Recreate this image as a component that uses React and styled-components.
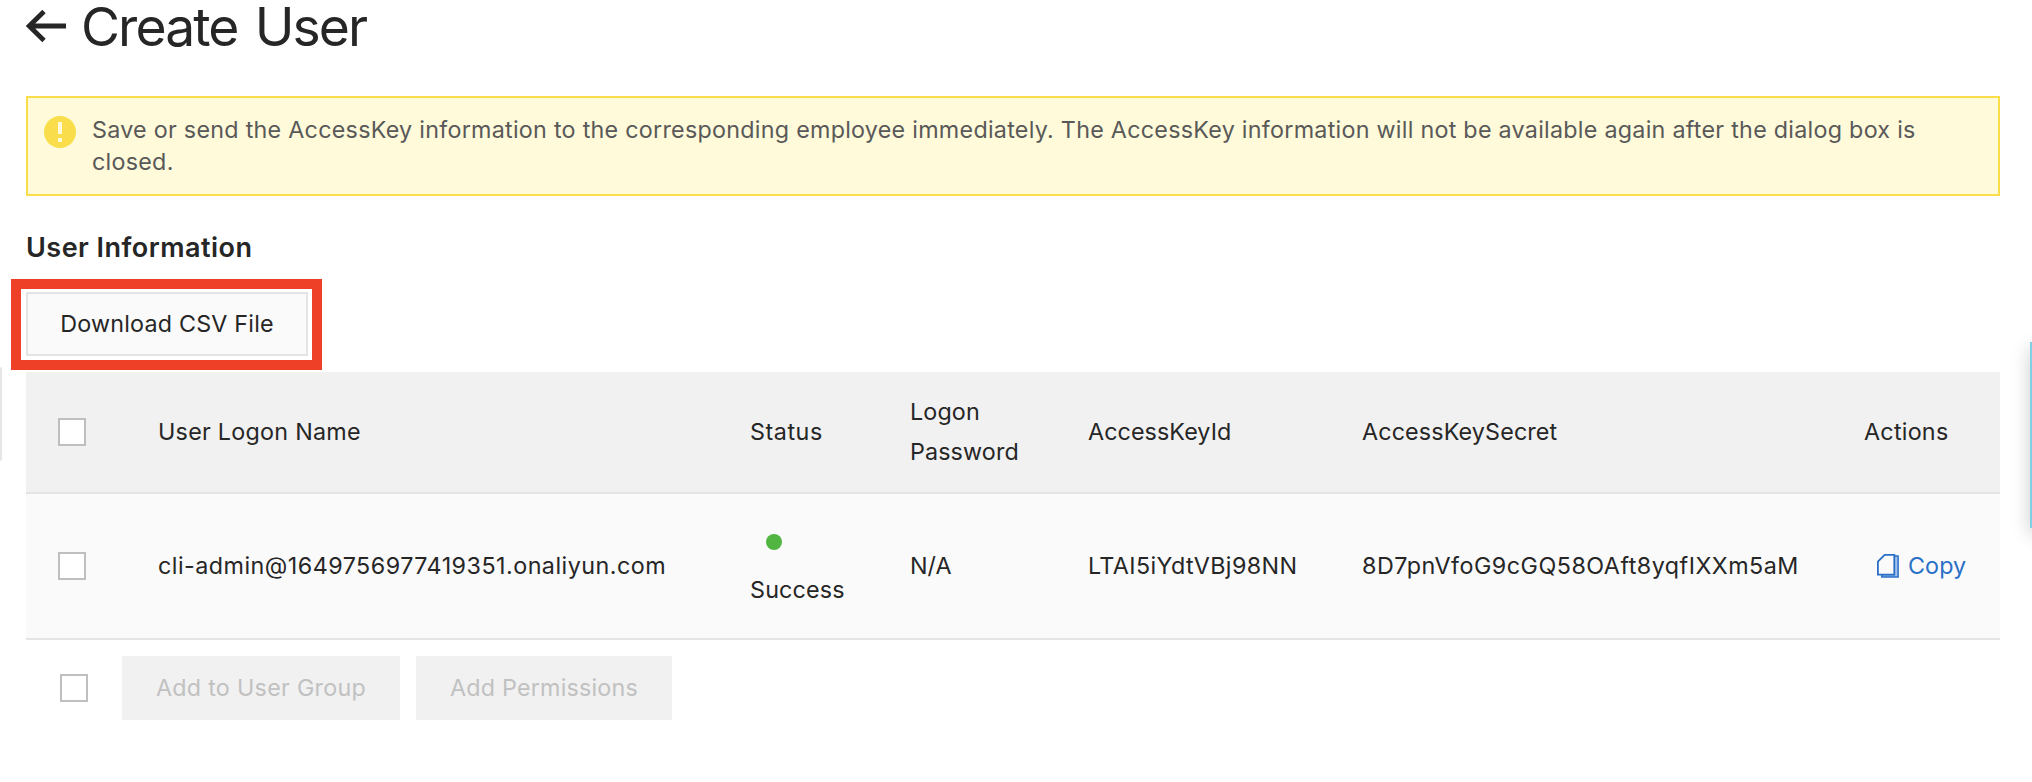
import React from 'react';
import styled, { createGlobalStyle } from 'styled-components';

const GlobalStyle = createGlobalStyle`
  * { box-sizing: border-box; }
  body {
    margin: 0;
    background: #fff;
    color: #262626;
    font-family: Inter, "Liberation Sans", sans-serif;
    font-size: 23.3px;
    line-height: 40px;
    overflow: hidden;
  }
`;

const Page = styled.main`
  position: relative;
  height: 782px;
  padding: 0 32px 0 26px;
  display: flex;
  flex-direction: column;
`;

const Header = styled.header`
  display: flex;
  align-items: center;
  gap: 15px;
  height: 52px;
  margin-bottom: 44px;
`;

const Title = styled.h1`
  margin: 0;
  padding-top: 1px;
  font-size: 53.4px;
  font-weight: 400;
  line-height: 52px;
  letter-spacing: -1.9px;
  word-spacing: 4px;
`;

const Alert = styled.section`
  display: flex;
  gap: 16px;
  padding: 16px 60px 16px 16px;
  border: 2px solid #f9dd4a;
  background: #fefada;
  color: #595959;
  line-height: 32px;
`;

const AlertIcon = styled.svg`
  flex: none;
  margin-top: 2px;
`;

const AlertText = styled.p`
  margin: 0;
  letter-spacing: 0.265px;
`;

const SectionTitle = styled.h2`
  margin: 32px 0 0;
  font-size: 27px;
  font-weight: 600;
  line-height: 40px;
  letter-spacing: 0.48px;
`;

const Highlight = styled.div`
  align-self: flex-start;
  margin: 11px 0 2px -15px;
  padding: 3px 4px 4px 5px;
  border: 10px solid #ed4026;
`;

const Button = styled.button`
  display: flex;
  align-items: center;
  justify-content: center;
  width: ${(p) => p.$width}px;
  height: 64px;
  padding: 0;
  border: 2px solid ${(p) => (p.disabled ? '#f1f1f1' : '#e4e4e4')};
  background: ${(p) => (p.disabled ? '#f1f1f1' : '#fafafa')};
  color: ${(p) => (p.disabled ? '#c1c1c1' : '#262626')};
  font: inherit;
  letter-spacing: ${(p) => p.$tracking}px;
`;

const Table = styled.div`
  display: flex;
  flex-direction: column;
`;

const Row = styled.div`
  display: grid;
  grid-template-columns: 100px 592px 160px 178px 274px 502px 168px;
  align-items: center;
  height: ${(p) => (p.$head ? 122 : 146)}px;
  border-bottom: 2px solid #e4e4e4;
  background: ${(p) => (p.$head ? '#f1f1f1' : '#fafafa')};
`;

const Cell = styled.div`
  padding-left: 32px;
  letter-spacing: ${(p) => p.$tracking || 0}px;
`;

const Checkbox = styled.input.attrs({ type: 'checkbox' })`
  display: block;
  appearance: none;
  width: 28px;
  height: 28px;
  margin: 0;
  border: 2px solid #bfbfbf;
  background: #fff;
`;

const Status = styled.div`
  display: flex;
  flex-direction: column;
  line-height: 48px;
`;

const StatusDot = styled.span`
  width: 16px;
  height: 16px;
  margin: 16px;
  border-radius: 50%;
  background: #52b441;
`;

const CopyLink = styled.a`
  display: flex;
  align-items: center;
  gap: 9px;
  padding-left: 13px;
  color: #2a70c8;
  cursor: pointer;
`;

const Footer = styled.footer`
  display: flex;
  align-items: center;
  margin-top: 16px;
  padding-left: 34px;
`;

const FooterButtons = styled.div`
  display: flex;
  gap: 16px;
  margin-left: 34px;
`;

const LeftHandle = styled.div`
  position: absolute;
  left: -4px;
  top: 367px;
  width: 6px;
  height: 94px;
  border-radius: 2px;
  background: #e6e6e6;
`;

const RightTab = styled.div`
  position: absolute;
  right: -60px;
  top: 342px;
  width: 62px;
  height: 186px;
  background: #7fd0e5;
  box-shadow: 0 6px 18px rgba(0, 0, 0, 0.2);
`;

const BackArrow = () => (
  <svg width="40" height="34" viewBox="0 0 40 34" fill="none" stroke="#262626" strokeWidth="4.8">
    <path d="M18 2.5 3.2 17 18 31.5M3 17H40" />
  </svg>
);

const CopyIcon = () => (
  <svg width="22" height="24" viewBox="0 0 22 24" fill="none" stroke="#2a70c8" strokeWidth="1.8">
    <path d="M17 1.9h4.1v21.2H4.8v-2.6H17z" fill="#a5c3e8" strokeWidth="1.5" />
    <path d="M7.6.9h9.7v19.7H.9V7.6z" fill="#fafafa" />
  </svg>
);

export default function App() {
  return (
    <>
      <GlobalStyle />
      <Page>
        <Header>
          <BackArrow />
          <Title>Create User</Title>
        </Header>

        <Alert>
          <AlertIcon width="32" height="32" viewBox="0 0 32 32">
            <circle cx="16" cy="16" r="16" fill="#f9dd4a" />
            <path d="M14 6h4v12h-4zM14 22h4v4h-4z" fill="#fefada" />
          </AlertIcon>
          <AlertText>
            Save or send the AccessKey information to the corresponding employee immediately. The
            AccessKey information will not be available again after the dialog box is closed.
          </AlertText>
        </Alert>

        <SectionTitle>User Information</SectionTitle>
        <Highlight>
          <Button $width={282} $tracking={0.2}>Download CSV File</Button>
        </Highlight>

        <Table>
          <Row $head>
            <Cell><Checkbox aria-label="Select all" /></Cell>
            <Cell $tracking={0.265}>User Logon Name</Cell>
            <Cell $tracking={0.55}>Status</Cell>
            <Cell $tracking={0.12}>Logon Password</Cell>
            <Cell $tracking={0.08}>AccessKeyId</Cell>
            <Cell $tracking={0.14}>AccessKeySecret</Cell>
            <Cell $tracking={0.25}>Actions</Cell>
          </Row>
          <Row>
            <Cell><Checkbox aria-label="Select user" /></Cell>
            <Cell $tracking={0.48}>cli-admin@1649756977419351.onaliyun.com</Cell>
            <Cell $tracking={0.18}>
              <Status>
                <StatusDot />
                Success
              </Status>
            </Cell>
            <Cell>N/A</Cell>
            <Cell $tracking={0.4}>LTAI5iYdtVBj98NN</Cell>
            <Cell $tracking={0.49}>8D7pnVfoG9cGQ58OAft8yqfIXXm5aM</Cell>
            <Cell $tracking={0.1}>
              <CopyLink>
                <CopyIcon />
                Copy
              </CopyLink>
            </Cell>
          </Row>
        </Table>

        <Footer>
          <Checkbox aria-label="Select all users" />
          <FooterButtons>
            <Button disabled $width={278} $tracking={0.28}>Add to User Group</Button>
            <Button disabled $width={256} $tracking={0.2}>Add Permissions</Button>
          </FooterButtons>
        </Footer>

        <LeftHandle />
        <RightTab />
      </Page>
    </>
  );
}
